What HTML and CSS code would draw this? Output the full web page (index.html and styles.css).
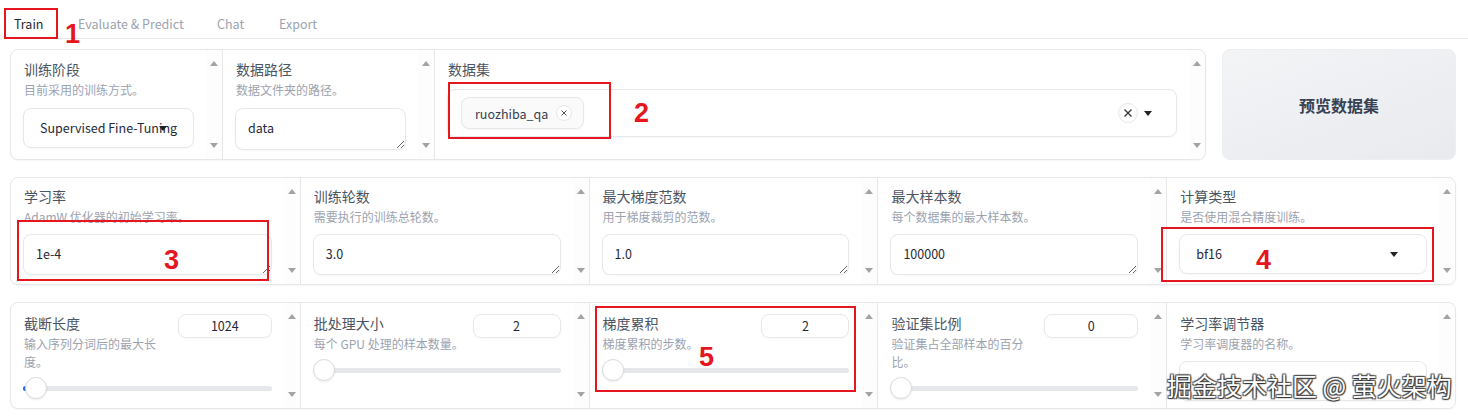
FILE: index.html
```html
<!DOCTYPE html>
<html lang="zh-CN">
<head>
<meta charset="utf-8">
<title>LLaMA Board · Train</title>
<link rel="stylesheet" href="styles.css">
</head>
<body>
<div class="page">
  <nav class="tabs">
    <button class="tab tab-train active">Train</button>
    <button class="tab tab-eval">Evaluate &amp; Predict</button>
    <button class="tab tab-chat">Chat</button>
    <button class="tab">Export</button>
  </nav>

  <!-- stage / dataset row -->
  <div class="row row-1">
    <div class="block form form-1">
      <div class="cell">
        <div class="cell-body">
          <div class="label">训练阶段</div>
          <div class="info">目前采用的训练方式。</div>
          <div class="select control">Supervised Fine-Tuning<span class="caret"></span></div>
        </div>
        <div class="scroll"><span class="up"></span><span class="down"></span></div>
      </div>
      <div class="cell">
        <div class="cell-body">
          <div class="label">数据路径</div>
          <div class="info">数据文件夹的路径。</div>
          <textarea class="text control tall" rows="1" readonly>data</textarea>
        </div>
        <div class="scroll"><span class="up"></span><span class="down"></span></div>
      </div>
      <div class="cell">
        <div class="cell-body">
          <div class="label">数据集</div>
          <div class="multiselect">
            <span class="chip">ruozhiba_qa
              <span class="chip-x"><svg width="8" height="8" viewBox="0 0 8 8"><path d="M1.5 1.5l5 5M6.5 1.5l-5 5" stroke="#555" stroke-width="1"/></svg></span>
            </span>
            <span class="ms-actions">
              <span class="clear"><svg width="10" height="10" viewBox="0 0 10 10"><path d="M1.5 1.5l7 7M8.5 1.5l-7 7" stroke="#333" stroke-width="1.3"/></svg></span>
              <span class="caret-inline"></span>
            </span>
          </div>
        </div>
        <div class="scroll"><span class="up"></span><span class="down"></span></div>
      </div>
    </div>
    <button class="preview">预览数据集</button>
  </div>

  <!-- optimiser row -->
  <div class="row">
    <div class="block form form-5 h108">
      <div class="cell">
        <div class="cell-body">
          <div class="label">学习率</div>
          <div class="info">AdamW 优化器的初始学习率。</div>
          <textarea class="text control" rows="1" readonly>1e-4</textarea>
        </div>
        <div class="scroll"><span class="up"></span><span class="down"></span></div>
      </div>
      <div class="cell">
        <div class="cell-body">
          <div class="label">训练轮数</div>
          <div class="info">需要执行的训练总轮数。</div>
          <textarea class="text control" rows="1" readonly>3.0</textarea>
        </div>
        <div class="scroll"><span class="up"></span><span class="down"></span></div>
      </div>
      <div class="cell">
        <div class="cell-body">
          <div class="label">最大梯度范数</div>
          <div class="info">用于梯度裁剪的范数。</div>
          <textarea class="text control" rows="1" readonly>1.0</textarea>
        </div>
        <div class="scroll"><span class="up"></span><span class="down"></span></div>
      </div>
      <div class="cell">
        <div class="cell-body">
          <div class="label">最大样本数</div>
          <div class="info">每个数据集的最大样本数。</div>
          <textarea class="text control" rows="1" readonly>100000</textarea>
        </div>
        <div class="scroll"><span class="up"></span><span class="down"></span></div>
      </div>
      <div class="cell">
        <div class="cell-body">
          <div class="label">计算类型</div>
          <div class="info">是否使用混合精度训练。</div>
          <div class="select control">bf16<span class="caret caret-wide"></span></div>
        </div>
        <div class="scroll"><span class="up"></span><span class="down"></span></div>
      </div>
    </div>
  </div>

  <!-- slider row -->
  <div class="row">
    <div class="block form form-5 h107">
      <div class="cell">
        <div class="cell-body slim">
          <div class="slider-head">
            <div class="head-text">
              <div class="label">截断长度</div>
              <div class="info">输入序列分词后的最大长度。</div>
            </div>
            <div class="number n94">1024</div>
          </div>
          <div class="slider"><span class="track"><span class="fill"></span></span><span class="thumb moved"></span></div>
        </div>
        <div class="scroll"><span class="up"></span><span class="down"></span></div>
      </div>
      <div class="cell">
        <div class="cell-body slim">
          <div class="slider-head">
            <div class="head-text">
              <div class="label">批处理大小</div>
              <div class="info one-line">每个 GPU 处理的样本数量。</div>
            </div>
            <div class="number n88">2</div>
          </div>
          <div class="slider"><span class="track"></span><span class="thumb"></span></div>
        </div>
        <div class="scroll"><span class="up"></span><span class="down"></span></div>
      </div>
      <div class="cell">
        <div class="cell-body slim">
          <div class="slider-head">
            <div class="head-text">
              <div class="label">梯度累积</div>
              <div class="info">梯度累积的步数。</div>
            </div>
            <div class="number n88">2</div>
          </div>
          <div class="slider"><span class="track"></span><span class="thumb"></span></div>
        </div>
        <div class="scroll"><span class="up"></span><span class="down"></span></div>
      </div>
      <div class="cell">
        <div class="cell-body slim">
          <div class="slider-head">
            <div class="head-text">
              <div class="label">验证集比例</div>
              <div class="info">验证集占全部样本的百分比。</div>
            </div>
            <div class="number n94">0</div>
          </div>
          <div class="slider"><span class="track"></span><span class="thumb"></span></div>
        </div>
        <div class="scroll"><span class="up"></span><span class="down"></span></div>
      </div>
      <div class="cell">
        <div class="cell-body slim">
          <div class="label">学习率调节器</div>
          <div class="info">学习率调度器的名称。</div>
          <div class="select control"></div>
        </div>
        <div class="scroll"><span class="up"></span><span class="down"></span></div>
      </div>
    </div>
  </div>

  <!-- callouts drawn over the form -->
  <span class="mark mark-1"></span><span class="num num-1">1</span>
  <span class="mark mark-2"></span><span class="num num-2">2</span>
  <span class="mark mark-3"></span><span class="num num-3">3</span>
  <span class="mark mark-4"></span><span class="num num-4">4</span>
  <span class="mark mark-5"></span><span class="num num-5">5</span>
  <span class="watermark">掘金技术社区 @ 萤火架构</span>
</div>
</body>
</html>
```

FILE: styles.css
```css
* { box-sizing: border-box; }

html, body {
  margin: 0;
  background: #fff;
}

body {
  width: 1468px;
  height: 416px;
  overflow: hidden;
  font-family: "Noto Sans CJK SC", "Noto Sans", sans-serif;
  color: #1f2937;
}

.page {
  position: relative;
  padding: 8px 12px 0 10px;
}

/* ---------- tabs ---------- */
.tabs {
  display: flex;
  height: 31px;
  margin: 0 -12px 0 -6px;
  padding: 1px 0 0 10px;
  border-bottom: 1px solid #e5e7eb;
}

.tab {
  border: 0;
  background: none;
  padding: 0;
  font: inherit;
  font-size: 12.5px;
  line-height: 29px;
  color: #9ca3af;
  text-align: left;
  cursor: pointer;
}
.tab.active { color: #1f2937; }
.tab-train { width: 64px; }
.tab-eval { width: 139px; }
.tab-chat { width: 62px; }

/* ---------- rows & blocks ---------- */
.row {
  display: flex;
  gap: 16px;
  margin-top: 17px;
}
.row-1 { margin-top: 10px; }

.block {
  background: #fff;
  border: 1px solid #e5e7eb;
  border-radius: 8px;
  box-shadow: 0 1px 2px rgba(0, 0, 0, 0.04);
  overflow: hidden;
}

.form { display: grid; flex: 1; }
.form-1 { grid-template-columns: 211px 212px 1fr; height: 111px; flex: 0 0 1196px; }
.form-5 { grid-template-columns: repeat(5, 1fr); }
.h108 { height: 108px; }
.h107 { height: 107px; }

.cell {
  display: flex;
  min-width: 0;
}
.cell + .cell { border-left: 1px solid #e5e7eb; }

.cell-body {
  flex: 1;
  min-width: 0;
  padding: 8px 12px 0 12px;
}
.row-1 .cell-body { padding-top: 9px; }
.cell-body.slim { padding-top: 10px; }

/* scroll rail on each column */
.scroll {
  width: 16px;
  flex: 0 0 16px;
  display: flex;
  flex-direction: column;
  justify-content: space-between;
  align-items: center;
  padding: 11px 0 11px;
  background: #fdfdfd;
}
.up, .down {
  width: 0;
  height: 0;
  border-left: 4px solid transparent;
  border-right: 4px solid transparent;
}
.up { border-bottom: 5px solid #a3a3a3; }
.down { border-top: 5px solid #a3a3a3; }

/* ---------- text ---------- */
.label {
  font-size: 14px;
  line-height: 20px;
  color: #4b5563;
  padding-left: 1px;
}
.info {
  margin-top: 2px;
  font-size: 12px;
  line-height: 18px;
  color: #9ca3af;
  padding-left: 1px;
}
.info.one-line { white-space: nowrap; }

/* ---------- controls ---------- */
.control { margin-top: 8px; }
.row-1 .control { margin-top: 9px; }

.select {
  position: relative;
  height: 40px;
  border: 1px solid #e5e7eb;
  border-radius: 8px;
  padding: 0 16px;
  font-size: 12.5px;
  line-height: 38px;
  white-space: nowrap;
  color: #1f2937;
  box-shadow: 0 1px 2px rgba(0, 0, 0, 0.03);
}
.caret {
  position: absolute;
  right: 26px;
  top: 17px;
  width: 0;
  height: 0;
  border-left: 4px solid transparent;
  border-right: 4px solid transparent;
  border-top: 5px solid #222;
}
.caret-wide { right: 28px; }

.text {
  display: block;
  width: 100%;
  height: 41px;
  border: 1px solid #e5e7eb;
  border-radius: 8px;
  padding: 9px 12px;
  font-family: inherit;
  font-size: 12.5px;
  line-height: 20px;
  color: #1f2937;
  background: #fff;
  resize: vertical;
  overflow: hidden;
  outline: none;
  box-shadow: 0 1px 2px rgba(0, 0, 0, 0.03);
}
.text.tall { height: 42px; }

/* dataset multiselect */
.multiselect {
  display: flex;
  align-items: center;
  justify-content: space-between;
  height: 48px;
  margin-top: 10px;
  padding: 0 24px 0 13px;
  border: 1px solid #e5e7eb;
  border-radius: 8px;
  box-shadow: 0 1px 2px rgba(0, 0, 0, 0.03);
}
.chip {
  display: flex;
  align-items: center;
  gap: 8px;
  height: 32px;
  padding: 0 11px 0 13px;
  border: 1px solid #e5e7eb;
  border-radius: 8px;
  background: #fafafb;
  font-size: 12.5px;
  color: #374151;
  box-shadow: 0 1px 2px rgba(0, 0, 0, 0.04);
}
.chip-x {
  display: flex;
  align-items: center;
  justify-content: center;
  width: 16px;
  height: 16px;
  border: 1px solid #e5e7eb;
  border-radius: 50%;
  background: #fff;
}
.ms-actions {
  display: flex;
  align-items: center;
  gap: 6px;
}
.clear {
  display: flex;
  align-items: center;
  justify-content: center;
  width: 20px;
  height: 20px;
  border: 1px solid #e5e7eb;
  border-radius: 50%;
  background: #fff;
}
.caret-inline {
  width: 0;
  height: 0;
  border-left: 4px solid transparent;
  border-right: 4px solid transparent;
  border-top: 5px solid #222;
}

/* preview button */
.preview {
  flex: 1;
  height: 111px;
  border: 1px solid #eceef1;
  border-radius: 8px;
  background: linear-gradient(160deg, #f3f4f6, #e8eaee);
  font-family: inherit;
  font-size: 16px;
  font-weight: 700;
  color: #374151;
  cursor: pointer;
}

/* sliders */
.slider-head {
  display: flex;
  gap: 12px;
}
.head-text { flex: 1; min-width: 0; }
.number {
  flex: 0 0 auto;
  height: 24px;
  margin-top: 1px;
  border: 1px solid #e5e7eb;
  border-radius: 8px;
  font-size: 12.5px;
  line-height: 22px;
  text-align: center;
  color: #1f2937;
  box-shadow: 0 1px 2px rgba(0, 0, 0, 0.03);
}
.n94 { width: 94px; }
.n88 { width: 88px; }

.slider {
  position: relative;
  display: flex;
  align-items: center;
  height: 22px;
  margin-top: 6px;
}
.track {
  display: flex;
  flex: 1;
  height: 5px;
  border-radius: 3px;
  background: #e5e7eb;
  overflow: hidden;
}
.fill {
  width: 4px;
  background: #2563eb;
}
.thumb {
  position: absolute;
  left: 0;
  top: 0;
  width: 22px;
  height: 22px;
  border-radius: 50%;
  background: #fff;
  border: 1px solid #d9dce1;
  box-shadow: 0 1px 2px rgba(0, 0, 0, 0.08);
}
.thumb.moved { left: 2px; }

/* ---------- callouts ---------- */
.mark {
  position: absolute;
  border: 2px solid #e5161d;
  pointer-events: none;
}
.mark-1 { left: 4px; top: 8px; width: 54px; height: 31px; }
.mark-2 { left: 448px; top: 82px; width: 163px; height: 57px; }
.mark-3 { left: 17px; top: 220px; width: 252px; height: 61px; }
.mark-4 { left: 1161px; top: 227px; width: 273px; height: 55px; }
.mark-5 { left: 595px; top: 306px; width: 261px; height: 86px; }

.num {
  position: absolute;
  font-family: "Liberation Sans", Arial, sans-serif;
  font-weight: 700;
  font-size: 27px;
  line-height: 1;
  color: #e5161d;
}
.num-1 { left: 65px; top: 21px; }
.num-2 { left: 634px; top: 100px; }
.num-3 { left: 164px; top: 247px; }
.num-4 { left: 1256px; top: 247px; }
.num-5 { left: 699px; top: 344px; }

.watermark {
  position: absolute;
  left: 1167px;
  top: 369px;
  font-size: 25px;
  line-height: 32px;
  color: #fff;
  white-space: nowrap;
  text-shadow: 0 0 1px #333, 1px 1px 1px #333, -1px -1px 1px #555, 1px -1px 1px #555, -1px 1px 1px #555;
}
```
